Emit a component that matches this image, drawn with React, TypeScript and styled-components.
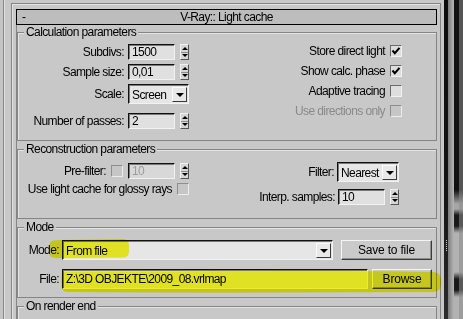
import React from 'react';
import styled, { createGlobalStyle } from 'styled-components';

const GlobalStyle = createGlobalStyle`
  html, body {
    margin: 0;
    padding: 0;
    background: #c8c8c8;
  }
  body {
    font-family: "Liberation Sans", Arial, sans-serif;
    font-size: 12px;
    color: #000;
  }
`;

const Page = styled.div`
  position: relative;
  display: flex;
  width: 463px;
  height: 319px;
  overflow: hidden;
  background: #c8c8c8;
  font-family: "Liberation Sans", Arial, sans-serif;
  font-size: 12px;
  letter-spacing: -0.6px;
  color: #000;
`;

const LeftRail = styled.div`
  flex: none;
  width: 11px;
  background: linear-gradient(
    to right,
    #c4c4c4 0 3px,
    #8a8a8a 3px 4px,
    #dedede 4px 5px,
    #c8c8c8 5px
  );
`;

const Frame = styled.div`
  flex: none;
  box-sizing: border-box;
  width: 430px;
  margin-top: 3px;
  padding: 5px 3px 0 4px;
  border: 1px solid #858585;
  border-bottom: none;
  box-shadow: inset 1px 1px 0 #e2e2e2;
  display: flex;
  flex-direction: column;
`;

const Rollout = styled.div`
  width: 421px;
  display: flex;
  flex-direction: column;
`;

const RolloutHeader = styled.div`
  box-sizing: border-box;
  height: 16px;
  border: 1px solid #000;
  background: #bdbdbd;
  display: flex;
  align-items: center;
  position: relative;
`;

const Collapse = styled.span`
  width: 20px;
  padding-left: 5px;
  box-sizing: border-box;
  line-height: 14px;
`;

const Title = styled.span`
  flex: 1;
  text-align: center;
  padding-right: 20px;
  line-height: 14px;
`;

const RolloutBody = styled.div`
  border-left: 1px solid #858585;
  display: flex;
  flex-direction: column;
`;

const GroupBox = styled.div<{ $h: number; $first?: boolean }>`
  box-sizing: border-box;
  margin-top: ${(p) => (p.$first ? 7 : 8)}px;
  height: ${(p) => p.$h}px;
  border: 1px solid #858585;
  box-shadow: inset 1px 1px 0 #e4e4e4;
  display: flex;
  flex-direction: column;
`;

const GroupLabel = styled.div`
  align-self: flex-start;
  margin: -8px 0 0 6px;
  padding: 0 2px;
  height: 15px;
  line-height: 15px;
  background: #c8c8c8;
`;

const GroupContent = styled.div`
  display: flex;
  justify-content: space-between;
  align-items: flex-start;
`;

const Col = styled.div<{ $w?: number; $top: number; $right?: number }>`
  display: flex;
  flex-direction: column;
  ${(p) => (p.$w ? `width: ${p.$w}px;` : '')}
  padding-top: ${(p) => p.$top}px;
  padding-right: ${(p) => p.$right ?? 0}px;
`;

const Row = styled.div<{ $h: number; $mt?: number; $gap?: number }>`
  display: flex;
  align-items: center;
  justify-content: flex-end;
  height: ${(p) => p.$h}px;
  margin-top: ${(p) => p.$mt ?? 0}px;
  gap: ${(p) => p.$gap ?? 4}px;
`;

const Label = styled.span<{ $disabled?: boolean }>`
  white-space: nowrap;
  color: ${(p) => (p.$disabled ? '#8a8a8a' : '#000')};
`;

const Field = styled.div<{ $w?: number; $disabled?: boolean; $bg?: string }>`
  box-sizing: border-box;
  ${(p) => (p.$w ? `width: ${p.$w}px; flex: none;` : 'flex: 1;')}
  height: 100%;
  display: flex;
  align-items: center;
  padding-left: 3px;
  background: ${(p) => p.$bg ?? '#e0e0e0'};
  border: 1px solid;
  border-color: #111 #f2f2f2 #f2f2f2 #111;
  box-shadow: inset 1px 1px 0 #787878;
  color: ${(p) => (p.$disabled ? '#9c9c9c' : '#000')};
  white-space: nowrap;
  overflow: hidden;
`;

const SpinGroup = styled.div`
  display: flex;
  align-items: center;
  gap: 5px;
  height: 100%;
`;

const Spinner = styled.div`
  box-sizing: border-box;
  width: 9px;
  height: 16px;
  display: flex;
  flex-direction: column;
  border: 1px solid;
  border-color: #f2f2f2 #555 #555 #f2f2f2;
  background: #d6d6d6;
`;

const SpinHalf = styled.div<{ $down?: boolean }>`
  flex: 1;
  display: flex;
  align-items: center;
  justify-content: center;
  ${(p) => (p.$down ? 'border-top: 1px solid #8c8c8c;' : '')}
  &::after {
    content: '';
    border-left: 3px solid transparent;
    border-right: 3px solid transparent;
    ${(p) => (p.$down ? 'border-top' : 'border-bottom')}: 3px solid #000;
  }
`;

const Select = styled.div<{ $w?: number }>`
  box-sizing: border-box;
  ${(p) => (p.$w ? `width: ${p.$w}px; flex: none;` : 'flex: 1;')}
  height: 100%;
  display: flex;
  align-items: stretch;
  padding: 2px 1px 1px 0;
  background: #e6e6e6;
  border: 1px solid;
  border-color: #111 #f2f2f2 #f2f2f2 #111;
  box-shadow: inset 1px 1px 0 #787878;
`;

const SelectText = styled.span`
  flex: 1;
  display: flex;
  align-items: center;
  padding-left: 3px;
  white-space: nowrap;
`;

const SelectArrow = styled.span`
  box-sizing: border-box;
  width: 15px;
  display: flex;
  align-items: center;
  justify-content: center;
  background: #e8e8e8;
  border: 1px solid;
  border-color: #fafafa #3a3a3a #3a3a3a #fafafa;
  &::after {
    content: '';
    border-left: 4px solid transparent;
    border-right: 4px solid transparent;
    border-top: 4px solid #000;
  }
`;

const Check = styled.span<{ $disabled?: boolean }>`
  box-sizing: border-box;
  flex: none;
  width: 12px;
  height: 12px;
  display: inline-flex;
  align-items: center;
  justify-content: center;
  border: 1px solid;
  border-color: ${(p) => (p.$disabled ? '#8e8e8e #ececec #ececec #8e8e8e' : '#6a6a6a #f2f2f2 #f2f2f2 #6a6a6a')};
  background: ${(p) => (p.$disabled ? '#c6c6c6' : '#dedede')};
`;

const PushButton = styled.div<{ $w: number; $ml: number }>`
  box-sizing: border-box;
  flex: none;
  width: ${(p) => p.$w}px;
  margin-left: ${(p) => p.$ml}px;
  height: 100%;
  display: flex;
  align-items: center;
  justify-content: center;
  background: #cacaca;
  border: 1px solid;
  border-color: #f4f4f4 #3c3c3c #3c3c3c #f4f4f4;
  box-shadow: inset -1px -1px 0 #8e8e8e;
  letter-spacing: -0.2px;
`;

const ModeContent = styled.div`
  display: flex;
  flex-direction: column;
  padding: 5px 4px 0 0;
`;

const ModeRow = styled.div<{ $mt?: number }>`
  display: flex;
  align-items: center;
  height: 20px;
  margin-top: ${(p) => p.$mt ?? 0}px;
`;

const ModeLabel = styled.span`
  flex: none;
  width: 41px;
  margin-right: 3px;
  text-align: right;
`;

const RightRail = styled.div`
  flex: none;
  display: flex;
  width: 22px;
`;

const RailGap = styled.div`
  width: 3px;
`;

const RailBar = styled.div`
  width: 4px;
  background: linear-gradient(to bottom, #0c0c0c 0, #141414 60%, #2c2c2c 100%);
  display: flex;
  justify-content: center;
  padding-top: 240px;
  box-sizing: border-box;
`;

const Gripper = styled.div`
  width: 1px;
  height: 11px;
  background: repeating-linear-gradient(to bottom, #cfcfcf 0 1px, transparent 1px 2px);
`;

const RailShade = styled.div`
  width: 6px;
  background: linear-gradient(to right, #7c7c7c, #b6b6b6);
`;

const RailEdge = styled.div`
  width: 9px;
  background:
    linear-gradient(to right, transparent 0 5px, rgba(140, 140, 140, 0.55) 5px),
    linear-gradient(
      to bottom,
      #101010 0 190px,
      #a6a6a6 204px,
      #a6a6a6 209px,
      #1a1a1a 215px,
      #1a1a1a 226px,
      #b2b2b2 233px,
      #b2b2b2 272px,
      #1a1a1a 279px,
      #1a1a1a 290px,
      #b2b2b2 297px
    );
`;

const Marker = styled.svg`
  position: absolute;
  left: 0;
  top: 0;
  width: 463px;
  height: 319px;
  pointer-events: none;
  mix-blend-mode: multiply;
`;

const CheckMark = () => (
  <svg width="10" height="10" viewBox="0 0 10 10">
    <polyline points="1.5,4.5 3.8,7.2 8.5,1.8" fill="none" stroke="#000" strokeWidth="2" />
  </svg>
);

const Spin = () => (
  <Spinner>
    <SpinHalf />
    <SpinHalf $down />
  </Spinner>
);

const SpinField = ({ value, disabled }: { value: string; disabled?: boolean }) => (
  <SpinGroup>
    <Field $w={47} $disabled={disabled} $bg={disabled ? '#d8d8d8' : undefined}>
      {value}
    </Field>
    <Spin />
  </SpinGroup>
);

const Dropdown = ({ value, width }: { value: string; width?: number }) => (
  <Select $w={width}>
    <SelectText>{value}</SelectText>
    <SelectArrow />
  </Select>
);

const CheckRow = ({ label, checked, disabled }: { label: string; checked?: boolean; disabled?: boolean }) => (
  <Row $h={20} $gap={5}>
    <Label $disabled={disabled}>{label}</Label>
    <Check $disabled={disabled}>{checked && <CheckMark />}</Check>
  </Row>
);

export default function App() {
  return (
    <>
      <GlobalStyle />
      <Page>
        <LeftRail />
        <Frame>
          <Rollout>
            <RolloutHeader>
              <Collapse>-</Collapse>
              <Title>V-Ray:: Light cache</Title>
            </RolloutHeader>
            <RolloutBody>
              <GroupBox $h={109} $first>
                <GroupLabel>Calculation parameters</GroupLabel>
                <GroupContent>
                  <Col $w={171} $top={4}>
                    <Row $h={16}>
                      <Label>Subdivs:</Label>
                      <SpinField value="1500" />
                    </Row>
                    <Row $h={16} $mt={4}>
                      <Label>Sample size:</Label>
                      <SpinField value="0,01" />
                    </Row>
                    <Row $h={20} $mt={4}>
                      <Label>Scale:</Label>
                      <Dropdown value="Screen" width={61} />
                    </Row>
                    <Row $h={16} $mt={9}>
                      <Label>Number of passes:</Label>
                      <SpinField value="2" />
                    </Row>
                  </Col>
                  <Col $top={1} $right={34}>
                    <CheckRow label="Store direct light" checked />
                    <CheckRow label="Show calc. phase" checked />
                    <CheckRow label="Adaptive tracing" />
                    <CheckRow label="Use directions only" disabled />
                  </Col>
                </GroupContent>
              </GroupBox>

              <GroupBox $h={70}>
                <GroupLabel>Reconstruction parameters</GroupLabel>
                <GroupContent>
                  <Col $w={171} $top={6}>
                    <Row $h={16} $gap={5}>
                      <Label>Pre-filter:</Label>
                      <Check $disabled />
                      <SpinField value="10" disabled />
                    </Row>
                    <Row $h={16} $mt={2} $gap={5}>
                      <Label>Use light cache for glossy rays</Label>
                      <Check $disabled />
                    </Row>
                  </Col>
                  <Col $top={5} $right={37}>
                    <Row $h={20} $gap={3}>
                      <Label>Filter:</Label>
                      <Dropdown value="Nearest" width={62} />
                    </Row>
                    <Row $h={16} $mt={7} $gap={3}>
                      <Label>Interp. samples:</Label>
                      <SpinField value="10" />
                    </Row>
                  </Col>
                </GroupContent>
              </GroupBox>

              <GroupBox $h={71}>
                <GroupLabel>Mode</GroupLabel>
                <ModeContent>
                  <ModeRow>
                    <ModeLabel>Mode:</ModeLabel>
                    <Dropdown value="From file" />
                    <PushButton $w={91} $ml={8}>Save to file</PushButton>
                  </ModeRow>
                  <ModeRow $mt={9}>
                    <ModeLabel>File:</ModeLabel>
                    <Field $bg="#e6e6e6">Z:\3D OBJEKTE\2009_08.vrlmap</Field>
                    <PushButton $w={60} $ml={4}>Browse</PushButton>
                  </ModeRow>
                </ModeContent>
              </GroupBox>

              <GroupBox $h={40}>
                <GroupLabel>On render end</GroupLabel>
              </GroupBox>
            </RolloutBody>
          </Rollout>
        </Frame>
        <RightRail>
          <RailGap />
          <RailBar>
            <Gripper />
          </RailBar>
          <RailShade />
          <RailEdge />
        </RightRail>

        <Marker viewBox="0 0 463 319">
          <path
            d="M50 242 Q53 239.5 62 240 L124 239 Q130 240 129 248 Q130 256 125 257.5 L64 258 Q52 258.5 50 256 Q48.5 249 50 242 Z"
            fill="rgb(250,250,40)"
          />
          <path
            d="M62 271.5 L300 271 Q380 270.5 434 272 Q442 273 441 282 Q442 291 434 292 L300 292.5 Q180 293 66 292 Q61 291 61.5 282 Z"
            fill="rgb(250,250,40)"
          />
        </Marker>
      </Page>
    </>
  );
}
